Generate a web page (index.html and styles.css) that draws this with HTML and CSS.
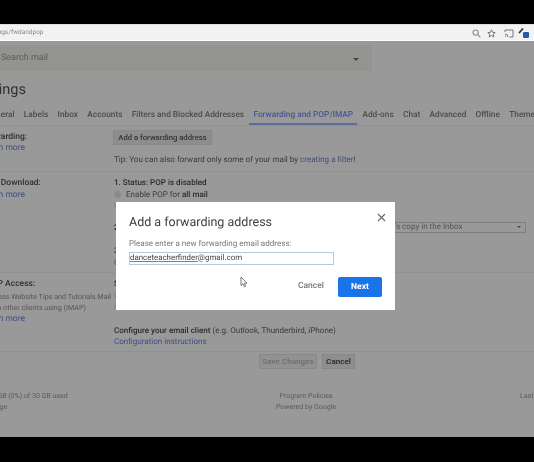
FILE: index.html
```html
<!DOCTYPE html>
<html lang="en">

<head>
    <meta charset="utf-8">
    <meta name="viewport" content="width=device-width, initial-scale=1.0">
    <title>Settings - Forwarding and POP/IMAP</title>
    <link rel="stylesheet" href="styles.css">
</head>

<body>
    <div class="bar-black top"></div>

    <main class="screen">
        <div class="urlbar">
            <span class="url">settings/fwdandpop</span>
            <div class="url-icons">
                <svg width="9" height="9" viewBox="0 0 9 9"><circle cx="3.6" cy="3.6" r="2.6" fill="none" stroke="#8a8a8a" stroke-width="1.1"/><path d="M5.6 5.6 8.4 8.4" stroke="#8a8a8a" stroke-width="1.2"/></svg>
                <svg class="star" width="9" height="9" viewBox="0 0 10 10"><path d="M5 1l1.2 2.7 2.9.3-2.2 1.9.7 2.9L5 7.3 2.4 8.8l.7-2.9L.9 4l2.9-.3z" fill="none" stroke="#666" stroke-width="1"/></svg>
                <svg width="10" height="9" viewBox="0 0 10 9"><path d="M1 3V1h8v7H5.500M1 5a3 3 0 0 1 3 3M1 7a1 1 0 0 1 1 1" fill="none" stroke="#777" stroke-width="1"/></svg>
                <svg class="ext" width="12" height="12" viewBox="0 0 12 12"><path d="M1 6 5 1.500" stroke="#333" stroke-width="1.800"/><rect x="5" y="5" width="6" height="6" rx="1" fill="#1f5fa8"/></svg>
            </div>
        </div>

        <div class="mail">
            <div class="search">
                <span>Search mail</span>
                <i class="caret"></i>
            </div>

            <h1>Settings</h1>

            <nav class="tabs">
                <a>General</a>
                <a>Labels</a>
                <a>Inbox</a>
                <a>Accounts</a>
                <a>Filters and Blocked Addresses</a>
                <a class="active">Forwarding and POP/IMAP</a>
                <a>Add-ons</a>
                <a>Chat</a>
                <a>Advanced</a>
                <a>Offline</a>
                <a>Themes</a>
            </nav>

            <section class="row row-fwd">
                <div class="side">
                    <b>Forwarding:</b>
                    <a class="link">Learn more</a>
                </div>
                <div class="main">
                    <button class="btn">Add a forwarding address</button>
                    <p class="tip">Tip: You can also forward only some of your mail by <a class="link">creating a filter</a>!</p>
                </div>
            </section>

            <section class="row row-pop">
                <div class="side">
                    <b>POP Download:</b>
                    <a class="link">Learn more</a>
                </div>
                <div class="main">
                    <b>1. Status: POP is disabled</b>
                    <label class="radio"><i></i>Enable POP for <b>all mail</b></label>
                    <label class="radio"><i></i>Enable POP for mail that arrives from now on</label>
                    <div class="when">
                        <b>2. When messages are accessed with POP</b>
                        <div class="select">keep Gmail's copy in the Inbox<i class="caret small"></i></div>
                    </div>
                    <b class="step3">3. Configure your email client</b>
                    <a class="link">Configuration instructions</a>
                </div>
            </section>

            <section class="row row-imap">
                <div class="side">
                    <b>IMAP Access:</b>
                    <span class="note">Access Website Tips and Tutorials Mail</span>
                    <span class="note">from other clients using (IMAP)</span>
                    <a class="link">Learn more</a>
                </div>
                <div class="main">
                    <b>Status: IMAP is disabled</b>
                    <label class="radio"><i></i>Enable IMAP</label>
                    <label class="radio"><i></i>Disable IMAP</label>
                    <p class="conf"><b>Configure your email client</b> (e.g. Outlook, Thunderbird, iPhone)</p>
                    <a class="link">Configuration instructions</a>
                </div>
            </section>

            <div class="actions">
                <button class="btn off">Save Changes</button>
                <button class="btn dark">Cancel</button>
            </div>

            <footer>
                <div class="foot-left">
                    <span>0.01 GB (0%) of 30 GB used</span>
                    <span>Manage</span>
                </div>
                <div class="foot-mid">
                    <span>Program Policies</span>
                    <span>Powered by Google</span>
                </div>
                <div class="foot-right">
                    <span>Last account activity</span>
                </div>
            </footer>
        </div>

        <!-- dialog sits over the dimmed page -->
        <div class="dialog">
            <h2>Add a forwarding address</h2>
            <svg class="close" width="9" height="9" viewBox="0 0 9 9"><path d="M1 1l7 7M8 1 1 8" stroke="#666" stroke-width="1.100"/></svg>
            <p>Please enter a new forwarding email address:</p>
            <div class="field"><span class="typo">danceteacherfinder</span>@gmail.com</div>
            <div class="dialog-btns">
                <a class="plain">Cancel</a>
                <a class="next">Next</a>
            </div>
        </div>

        <svg class="cursor" width="9" height="12" viewBox="0 0 9 12"><path d="M1 1v8.500l2-1.800 1.300 3 1.400-.6-1.300-2.900H7z" fill="#fff" stroke="#555" stroke-width=".8"/></svg>
    </main>

    <div class="bar-black"></div>
</body>

</html>
```

FILE: styles.css
```css
* {
    box-sizing: border-box;
}

html, body {
    margin: 0;
    height: 462px;
    overflow: hidden;
    background: #000;
}

body {
    font-family: Roboto, "Liberation Sans", sans-serif;
    font-size: 8.5px;
    line-height: 11.5px;
    color: #3a3a3a;
    text-rendering: geometricPrecision;
}

.bar-black {
    height: 25px;
    background: #000;
}

.top {
    height: 24px;
}

.screen {
    position: relative;
    height: 413px;
    background: #999;
    overflow: hidden;
}

.urlbar {
    height: 17px;
    background: #f1f3f2;
    border-top: 1px solid #ddd;
    border-bottom: 1px solid #fff;
    display: flex;
    justify-content: space-between;
    align-items: center;
    padding: 1px 4px 0 0;
}

.url {
    font-size: 6.5px;
    color: #888;
    margin-left: -15px;
    filter: blur(.3px);
}

.url-icons {
    display: flex;
    align-items: center;
    gap: 6px;
}

.star {
    margin-right: 2.500px;
}

.ext {
    margin-left: -2px;
}

.mail {
    margin-left: -22px;
    width: 600px;
    filter: blur(.35px);
}

.search {
    margin: 4px 0 0 0;
    width: 394px;
    height: 26px;
    background: #93938f;
    display: flex;
    justify-content: space-between;
    align-items: center;
    padding: 2px 13px 0 23px;
    font-size: 9px;
    color: #5c5c5c;
}

.caret {
    width: 0;
    height: 0;
    border: 3px solid transparent;
    border-top: 3px solid #444;
    border-bottom: 0;
}

.caret.small {
    border-width: 2px;
    border-top-color: #444;
    border-bottom: 0;
}

h1 {
    margin: 9px 0 0 -5px;
    font-size: 14.500px;
    line-height: 20px;
    font-weight: 400;
    color: #333;
}

.tabs {
    display: flex;
    gap: 9.300px;
    margin: 5px 0 0 8px;
    height: 21px;
    line-height: 20.500px;
    font-size: 8.300px;
    font-weight: 500;
    color: #4b4b4b;
    white-space: nowrap;
    border-bottom: 1px solid #909090;
}

.tabs .active {
    color: #46598c;
    margin: 0 -4px;
    padding: 0 4px;
    border-bottom: 2px solid #5b6d9b;
}

.row {
    display: flex;
    border-bottom: 1px solid #919191;
}

.side {
    width: 136px;
    flex: none;
    display: flex;
    flex-direction: column;
    padding: 1px 0 0 4px;
}

.side b {
    font-weight: 500;
    color: #2e2e2e;
}

.main {
    flex: 1;
    display: flex;
    flex-direction: column;
    align-items: flex-start;
    font-size: 8.050px;
}

.main b {
    font-weight: 500;
    color: #2b2b2b;
}

.note {
    font-size: 7.200px;
    color: #555;
    margin-left: 4px;
    white-space: nowrap;
}

.link {
    color: #3f4f7c;
}

.row-fwd {
    height: 46px;
    padding-top: 4px;
}

.row-fwd .side {
    padding-top: 1.500px;
}

.btn {
    font: 500 7.700px/13px Roboto, "Liberation Sans", sans-serif;
    height: 15px;
    padding: 0;
    background: #8d8d8d;
    border: 1px solid #888;
    color: #333;
    white-space: nowrap;
}

.row-fwd .btn {
    width: 99px;
    margin-left: -1px;
}

.tip {
    margin: 9px 0 0;
}

.row-pop {
    height: 101px;
    padding-top: 5px;
}

.radio {
    display: flex;
    align-items: center;
    white-space: pre;
}

.radio i {
    width: 7px;
    height: 7px;
    border-radius: 50%;
    background: #8a8a8a;
    margin: 0 5px 0 0;
    border: 1px solid #888;
}

.when {
    display: flex;
    width: 412px;
    justify-content: space-between;
    margin-top: 10px;
}

.select {
    width: 196px;
    height: 11px;
    border: 1px solid #7f7f7f;
    display: flex;
    align-items: center;
    justify-content: space-between;
    padding: 0 4px 0 24px;
    color: #555;
}

.step3 {
    margin-top: 12px;
}

.row-imap {
    height: 79px;
    padding-top: 5px;
}

.conf {
    margin: 12px 0 0;
}

.actions {
    display: flex;
    gap: 5px;
    padding-left: 281px;
    margin-top: 2px;
}

.actions .btn {
    font-size: 8.100px;
}

.off {
    width: 58px;
    color: #6d6d6d;
    background: #929292;
}

.dark {
    width: 33px;
    color: #1f1f1f;
    background: #8e8e8e;
}

footer {
    display: grid;
    grid-template-columns: 268px 120px 1fr;
    margin-top: 22px;
    font-size: 7px;
    color: #5a5a5a;
    line-height: 11px;
    white-space: nowrap;
}

footer div {
    display: flex;
    flex-direction: column;
}

.foot-left {
    margin-left: 4px;
}

.foot-mid {
    text-align: center;
}

.foot-right {
    padding-left: 154px;
}

.dialog {
    position: absolute;
    left: 116px;
    top: 178px;
    width: 279px;
    height: 108px;
    background: #fff;
    padding: 12px 13px;
    filter: blur(.25px);
}

.dialog h2 {
    margin: 0;
    font-size: 12.500px;
    line-height: 18px;
    font-weight: 400;
    color: #3c4043;
}

.dialog p {
    margin: 6px 0 0;
    font-size: 8.050px;
    line-height: 11px;
    color: #777;
}

.close {
    position: absolute;
    top: 11px;
    right: 9px;
}

.field {
    width: 205px;
    height: 13px;
    margin-top: 3px;
    border: 1px solid #b9c8d6;
    font-size: 7.900px;
    line-height: 10px;
    color: #444;
}

.typo {
    text-decoration: underline #d8527a;
    text-underline-offset: 1px;
}

.dialog-btns {
    display: flex;
    justify-content: flex-end;
    align-items: center;
    gap: 14px;
    margin-top: 12px;
}

.plain {
    font-size: 8.500px;
    font-weight: 500;
    color: #777;
}

.next {
    width: 44px;
    height: 20px;
    background: #1a73e8;
    border-radius: 2px;
    color: #fff;
    font-size: 8.500px;
    font-weight: 700;
    line-height: 20px;
    text-align: center;
}

.cursor {
    position: absolute;
    left: 240px;
    top: 252px;
}
```
